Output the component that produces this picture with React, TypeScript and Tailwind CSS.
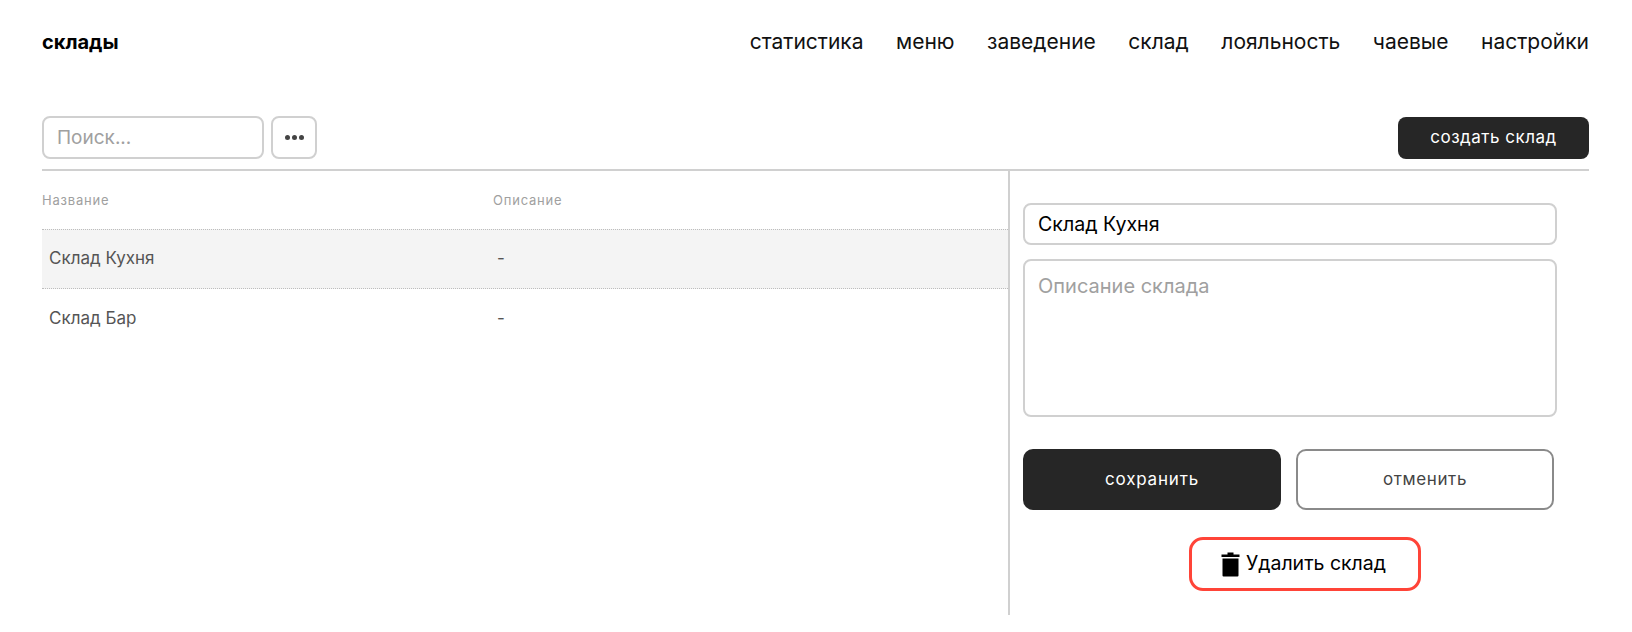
const navItems = ["статистика", "меню", "заведение", "склад", "лояльность", "чаевые", "настройки"];

const rows = [
  { name: "Склад Кухня", description: "-", active: true },
  { name: "Склад Бар", description: "-", active: false },
];

const TrashIcon = () => (
  <svg width="19" height="25" viewBox="0 0 19 25" fill="#000" className="shrink-0">
    <path d="M6.5 0.5h6v2h6v2.5H0.5V2.5h6z" />
    <path d="M1.5 6.5h16V23.5a1 1 0 0 1-1 1H2.5a1 1 0 0 1-1-1z" />
  </svg>
);

export default function App() {
  return (
    <div className="w-[1632px] h-[632px] bg-white overflow-hidden font-['Inter',sans-serif] pl-[42px] pr-[43px] pt-[26px]">
      <header className="flex items-center justify-between h-[32px]">
        <h1 className="text-[20px] font-bold text-black">склады</h1>
        <nav className="flex gap-[32.5px] text-[21px] text-[#111]">
          {navItems.map((item) => (
            <a key={item}>{item}</a>
          ))}
        </nav>
      </header>

      <div className="flex items-center justify-between mt-[58px] h-[43px]">
        <div className="flex gap-[7px]">
          <input
            placeholder="Поиск..."
            className="w-[222px] h-[43px] border-2 border-[#d0d0d0] rounded-lg px-[13px] text-[19px] placeholder:text-[#a0a0a0] outline-none"
          />
          <button className="w-[46px] h-[43px] border-2 border-[#d0d0d0] rounded-lg flex items-center justify-center gap-[2px]">
            <span className="w-[5px] h-[5px] rounded-full bg-[#444]" />
            <span className="w-[5px] h-[5px] rounded-full bg-[#444]" />
            <span className="w-[5px] h-[5px] rounded-full bg-[#444]" />
          </button>
        </div>
        <button className="w-[191px] h-[42px] bg-[#262626] text-white rounded-lg text-[17px] tracking-[0.5px]">
          создать склад
        </button>
      </div>

      <div className="flex mt-[10px] border-t-2 border-[#d0d0d0] h-[446px]">
        <section className="w-[968px] border-r-2 border-[#d0d0d0]">
          <div className="flex items-center h-[58px] pt-[1px] text-[13px] text-[#a0a0a0] tracking-[0.8px]">
            <span className="w-[451px]">Название</span>
            <span>Описание</span>
          </div>
          {rows.map((row) => (
            <div
              key={row.name}
              className={`flex items-center h-[60px] text-[17px] text-[#555] ${
                row.active ? "bg-[#f4f4f4] border-y border-dotted border-[#bdbdbd]" : ""
              }`}
            >
              <span className="w-[451px] pl-[7px]">{row.name}</span>
              <span className="pl-[4px]">{row.description}</span>
            </div>
          ))}
        </section>

        <section className="pl-[13px] pt-[32px] w-[548px]">
          <input
            defaultValue="Склад Кухня"
            className="block w-[534px] h-[42px] border-2 border-[#d0d0d0] rounded-lg px-[13px] text-[19.6px] text-black outline-none"
          />
          <textarea
            placeholder="Описание склада"
            className="block w-[534px] h-[158px] mt-[14px] border-2 border-[#d0d0d0] rounded-lg px-[13px] py-[10px] text-[20px] placeholder:text-[#a0a0a0] outline-none resize-none"
          />
          <div className="flex gap-[15px] mt-[32px]">
            <button className="w-[258px] h-[61px] bg-[#262626] text-white rounded-[10px] text-[17px] tracking-[0.8px]">
              сохранить
            </button>
            <button className="w-[258px] h-[61px] border-2 border-[#8a8a8a] text-[#444] rounded-[10px] text-[17px] tracking-[0.6px]">
              отменить
            </button>
          </div>
          <div className="flex mt-[27px] pl-[166px]">
            <button className="flex items-center justify-center gap-[6px] w-[232px] h-[54px] pr-[3px] border-[3px] border-[#ff4438] rounded-[14px] text-[19.5px] text-black">
              <TrashIcon />
              Удалить склад
            </button>
          </div>
        </section>
      </div>
    </div>
  );
}
